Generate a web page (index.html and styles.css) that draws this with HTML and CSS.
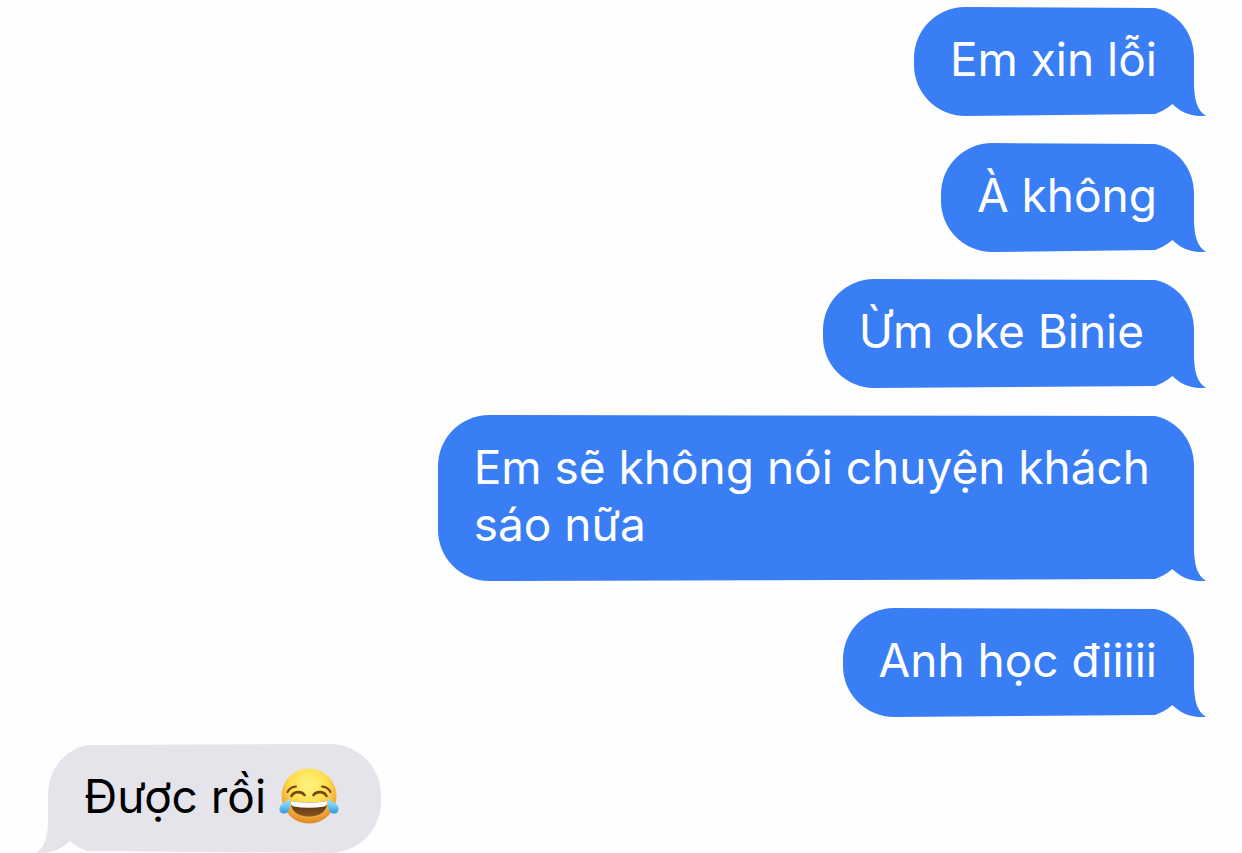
FILE: index.html
```html
<!DOCTYPE html>
<html lang="vi">
<head>
<meta charset="utf-8">
<meta name="viewport" content="width=device-width, initial-scale=1">
<title>Tin nhắn</title>
<link rel="stylesheet" href="styles.css">
</head>
<body>
<svg class="defs" aria-hidden="true">
  <defs>
    <symbol id="cap" viewBox="0 0 40 54"><path d="M0 1H1C24 6 40 26 40 51V54H0Z"/></symbol>
    <symbol id="tail" viewBox="0 0 52 54"><path d="M0 0H40V20C40 38 43 48 52 54C39 55 27 51 18.500 42C12 47 7 50 1 52H0Z"/></symbol>
    <radialGradient id="face" cx="0.5" cy="0.3" r="0.72">
      <stop offset="0" stop-color="#fff582"/><stop offset="0.5" stop-color="#fddc4b"/><stop offset="0.8" stop-color="#f0a436"/><stop offset="1" stop-color="#d98322"/>
    </radialGradient>
    <linearGradient id="mouth" x1="0" y1="0" x2="0" y2="1">
      <stop offset="0" stop-color="#4b2a0c"/><stop offset="1" stop-color="#8a5522"/>
    </linearGradient>
    <linearGradient id="tear" x1="0" y1="0" x2="0" y2="1">
      <stop offset="0" stop-color="#a9e4fb"/><stop offset="0.5" stop-color="#72c9f5"/><stop offset="1" stop-color="#2f93dc"/>
    </linearGradient>
  </defs>
</svg>
<main class="thread">
  <div class="bubble sent"><svg class="cap"><use href="#cap"/></svg><svg class="tail"><use href="#tail"/></svg><p class="text">Em xin lỗi</p></div>
  <div class="bubble sent"><svg class="cap"><use href="#cap"/></svg><svg class="tail"><use href="#tail"/></svg><p class="text">À không</p></div>
  <div class="bubble sent"><svg class="cap"><use href="#cap"/></svg><svg class="tail"><use href="#tail"/></svg><p class="text">Ừm oke Binie&nbsp;</p></div>
  <div class="bubble sent"><svg class="cap"><use href="#cap"/></svg><svg class="tail"><use href="#tail"/></svg><p class="text">Em sẽ không nói chuyện khách sáo nữa</p></div>
  <div class="bubble sent"><svg class="cap"><use href="#cap"/></svg><svg class="tail"><use href="#tail"/></svg><p class="text">Anh học điiiii</p></div>
  <div class="bubble received"><svg class="cap"><use href="#cap"/></svg><svg class="tail"><use href="#tail"/></svg><p class="text">Được rồi <svg class="emoji" viewBox="0 0 60 56" role="img" aria-label="Mặt cười ra nước mắt">
    <circle cx="30" cy="28" r="27.5" fill="url(#face)"/>
    <g fill="none" stroke="#75450f" stroke-linecap="round">
      <path d="M8.500 24Q11 19 17 18.500M51.500 24Q49 19 43 18.500" stroke-width="2"/>
      <path d="M12.500 28C15 23 22 23 25.500 27M47.500 28C45 23 38 23 34.500 27" stroke-width="2.600"/>
    </g>
    <path d="M12 33Q30 36 48 33C49 43 41 48.500 30 48.500S11 43 12 33Z" fill="url(#mouth)"/>
    <path d="M12 33Q30 36 48 33Q49 37 45.500 38.500Q30 41 14.500 38.500Q11 37 12 33Z" fill="#fff"/>
    <path d="M11 30C12 37 11 45 5.500 45.500C0 46 -1 40 2.500 36.500C5 34 9 33 11 30ZM49 30C48 37 49 45 54.500 45.500C60 46 61 40 57.500 36.500C55 34 51 33 49 30Z" fill="url(#tear)"/>
  </svg></p></div>
</main>
</body>
</html>
```
FILE: styles.css
```css
* {
  box-sizing: border-box;
}

body {
  margin: 0;
  background: #fefefe;
  font-family: Inter, "Noto Sans", sans-serif;
}

.defs {
  position: absolute;
  width: 0;
  height: 0;
}

.thread {
  display: flex;
  flex-direction: column;
  gap: 27px;
  padding: 7px 48px 0;
}

.bubble {
  position: relative;
  max-width: 66%;
  padding: 24px 37px 28px 36px;
  font-size: 46px;
  line-height: 57px;
}

.sent {
  --fill: #397ef5;
  align-self: flex-end;
  color: #fff;
}

.received {
  --fill: #e5e4ea;
  align-self: flex-start;
  padding-right: 42px;
  color: #000;
}

/* Rounded far side of the bubble, easing in slightly toward the tail */
.bubble::before {
  content: "";
  position: absolute;
  inset: 0 39px 0 0;
  border-radius: 51px 0 0 51px;
  background: var(--fill);
  clip-path: polygon(0 0, 51px 0, 100% 1px, 100% calc(100% - 2px), 51px 100%, 0 100%);
}

/* Straight edge between the cap and the tail */
.bubble::after {
  content: "";
  position: absolute;
  inset: 53px 0 53px auto;
  width: 40px;
  background: var(--fill);
}

.cap,
.tail {
  position: absolute;
  right: 0;
  height: 54px;
  fill: var(--fill);
}

.cap {
  top: 0;
  width: 40px;
}

.tail {
  right: -12px;
  bottom: 0;
  width: 52px;
}

.received::before {
  inset: 0 0 0 39px;
  transform: scaleX(-1);
}

.received::after {
  right: auto;
  left: 0;
}

.received .cap,
.received .tail {
  right: auto;
  left: 0;
  transform: scaleX(-1);
}

.received .tail {
  left: -12px;
}

.text {
  position: relative;
  z-index: 1;
  margin: 0;
}

.emoji {
  width: 60px;
  height: 56px;
  vertical-align: middle;
  margin-top: -8px;
}
```
